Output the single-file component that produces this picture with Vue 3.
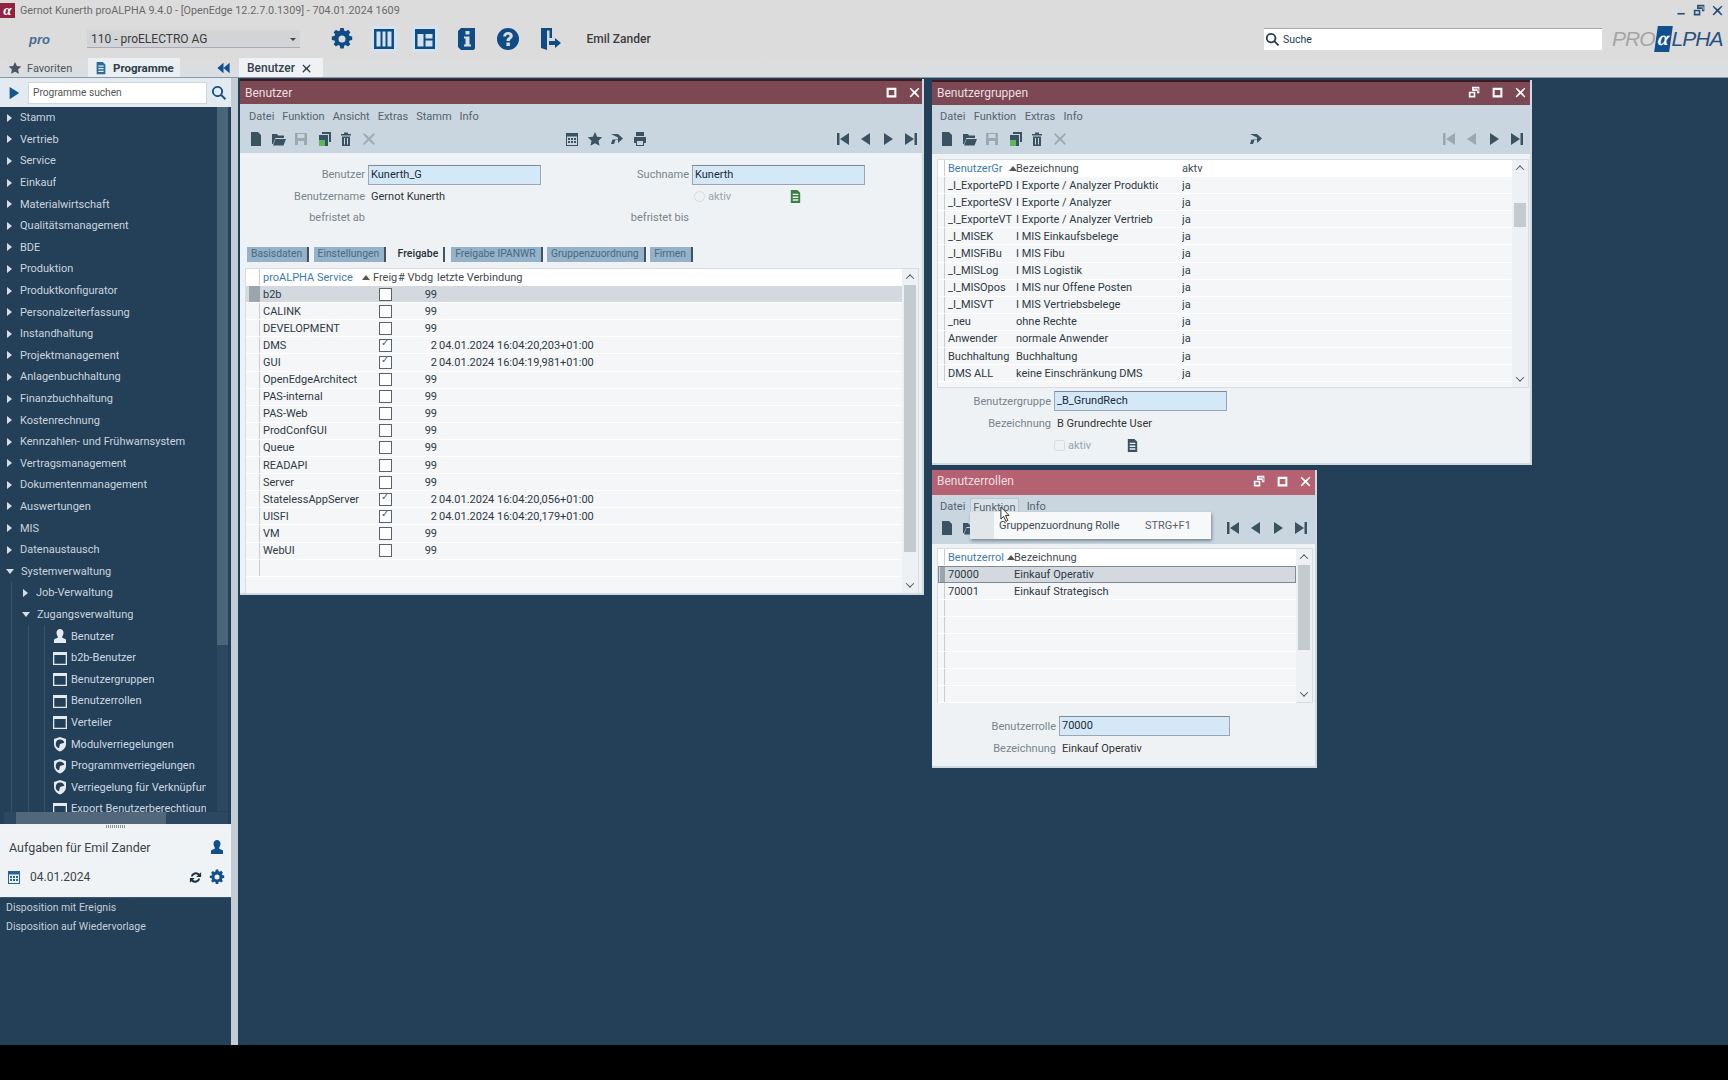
<script setup>
const icons = {
  gear: 'M10.3 1h3.4l.5 2.6 1.6.7 2.2-1.5 2.4 2.4-1.5 2.2.7 1.6 2.6.5v3.4l-2.6.5-.7 1.6 1.5 2.2-2.4 2.4-2.2-1.5-1.6.7-.5 2.6h-3.4l-.5-2.6-1.6-.7-2.2 1.5-2.4-2.4 1.5-2.2-.7-1.6-2.6-.5v-3.4l2.6-.5.7-1.6-1.5-2.2 2.4-2.4 2.2 1.5 1.6-.7zM12 8.5a3.5 3.5 0 1 0 0 7 3.5 3.5 0 0 0 0-7z',
  cols: 'M2 2h20v20H2zM4.5 4.5v15h4v-15zM10.5 4.5v15h3v-15zM15.500 4.5v15h4v-15z',
  tiles: 'M2 2h20v20H2zM4.500 7v12.500h6V7zM12.500 7v4.500h7V7zM12.500 13.500v6h7v-6z',
  info: 'M6 1h14v20a2 2 0 0 1-2 2H6l-3-3V4zM10.500 4v3.500h4V4zM9 9.500v2h1.500v6H9v2h7v-2h-1.500v-8z',
  help: 'M12 1a11 11 0 1 0 0 22 11 11 0 0 0 0-22zM12 5c3 0 4.800 1.600 4.800 3.900 0 2.600-3 3-3 5.100h-3.300c0-3.400 3-3.500 3-5 0-.8-.6-1.300-1.600-1.300-1.100 0-1.800.6-1.900 1.700H7.200C7.400 6.600 9.200 5 12 5zM10.400 15.500h3.500V19h-3.500z',
  exit: 'M3 1h11v10h-2.500V3.500H9V23l-6-2zM14 14h3v-3l6 5-6 5v-3h-6v-4z',
  new: 'M3 1h7l3 3v11H3z',
  open: 'M1 13V3h5l1 1.500h6V7H4.500L2 13zM4.500 8H15l-2.500 6.500H2z',
  save: 'M2 2h12v12H2zM4.500 3v4h7V3zM5 10v4h6v-4z',
  copy: 'M6 1h9v10h-2V3H6zM3 4h9v11H3z',
  trash: 'M3 3h10v1.500H3zM6 1.500h4V3H6zM4 5.500h8V15H4zM6 7v6.500h1V7zM9 7v6.500h1V7z',
  x: 'M2 3.200 3.200 2 8 6.400 12.800 2 14 3.200 9.700 8l4.300 4.800-1.200 1.200L8 9.600 3.200 14 2 12.800 6.300 8z',
  cal: 'M2 2h12v13H2zM3 5.500v8.500h10V5.500zM4 7h2v2H4zM7 7h2v2H7zM10 7h2v2h-2zM4 10h2v2H4zM7 10h2v2H7zM10 10h2v2h-2z',
  star: 'M8 1l2.200 4.700 5 .6-3.700 3.400 1 5L8 12.200l-4.500 2.500 1-5L.8 6.300l5-.6z',
  redo: 'M2 3h7l5 4.500-5 4.500v-3H6.500L5 13H2l1.500-4.500H9V6.500z',
  print: 'M4 1h8v4H4zM2 6h12v6h-2v3H4v-3H2zM5 10v4h6v-4z',
  first: 'M2 2h2.500v12H2zM14 2v12L5 8z',
  prev: 'M12 2v12L3 8z',
  next: 'M4 2v12l9-6z',
  last: 'M11.500 2H14v12h-2.500zM2 2v12l9-6z',
  doc: 'M3 1h7l3 3v11H3zM5 5v1.500h6V5zM5 8v1.500h6V8zM5 11v1.500h6V11z',
  restore: 'M5 1h9v8h-3V6H5zM7 3v1h5v3h1V3zM1 7h8v7H1zM3 9v3h4V9z',
  maxi: 'M2 2h12v12H2zM4.500 5v6.500h7V5z',
  search: 'M6.500 1a5.500 5.500 0 1 0 3.300 9.900l4 4 1.300-1.300-4-4A5.500 5.500 0 0 0 6.500 1zm0 1.800a3.700 3.700 0 1 1 0 7.400 3.700 3.700 0 0 1 0-7.400z',
  person: 'M8 1a3.500 3.500 0 0 1 3.500 3.800c0 2-1 3.300-1.500 4.100 0 1 2.500 1.300 4 2.600V15H2v-3.500c1.500-1.300 4-1.600 4-2.600-.5-.8-1.500-2.100-1.500-4.100A3.500 3.500 0 0 1 8 1z',
  window: 'M1 2h14v13H1zM2.300 5v8.700h11.400V5z',
  shield: 'M8 1l6 2v5c0 3.500-2.500 6-6 7.500C4.500 14 2 11.500 2 8V3zM8 3.500a4.500 4.500 0 0 0-1 8.800L8 8l4.300-1.300A4.500 4.500 0 0 0 8 3.500z',
  refresh: 'M3 7a5.500 5.500 0 0 1 9.300-3L14 2.300V7.500H8.800l1.900-1.900A3.500 3.500 0 0 0 5 7zM13 9a5.500 5.500 0 0 1-9.300 3L2 13.700V8.500h5.200l-1.900 1.900A3.500 3.500 0 0 0 11 9z',
  gear16: 'M6.800.500h2.400l.4 1.800 1.100.5 1.500-1 1.700 1.700-1 1.500.5 1.100 1.800.4v2.400l-1.800.4-.5 1.100 1 1.500-1.700 1.700-1.500-1-1.100.5-.4 1.800H6.800l-.4-1.800-1.100-.5-1.500 1-1.700-1.700 1-1.500-.5-1.100-1.800-.4V6.800l1.800-.4.5-1.100-1-1.500 1.700-1.700 1.500 1 1.100-.5zM8 5.500a2.500 2.500 0 1 0 0 5 2.500 2.500 0 0 0 0-5z'
}
const topIcons = ['gear', 'cols', 'tiles', 'info', 'help', 'exit']
const tree1 = ['Stamm','Vertrieb','Service','Einkauf','Materialwirtschaft','Qualitätsmanagement','BDE','Produktion','Produktkonfigurator','Personalzeiterfassung','Instandhaltung','Projektmanagement','Anlagenbuchhaltung','Finanzbuchhaltung','Kostenrechnung','Kennzahlen- und Frühwarnsystem','Vertragsmanagement','Dokumentenmanagement','Auswertungen','MIS','Datenaustausch']
const leaf = [['person','Benutzer'],['window','b2b-Benutzer'],['window','Benutzergruppen'],['window','Benutzerrollen'],['window','Verteiler'],['shield','Modulverriegelungen'],['shield','Programmverriegelungen'],['shield','Verriegelung für Verknüpfun'],['window','Export Benutzerberechtigun']]
const services = [
  ['b2b',0,'99',''],['CALINK',0,'99',''],['DEVELOPMENT',0,'99',''],
  ['DMS',1,'2','04.01.2024 16:04:20,203+01:00'],['GUI',1,'2','04.01.2024 16:04:19,981+01:00'],
  ['OpenEdgeArchitect',0,'99',''],['PAS-internal',0,'99',''],['PAS-Web',0,'99',''],['ProdConfGUI',0,'99',''],
  ['Queue',0,'99',''],['READAPI',0,'99',''],['Server',0,'99',''],
  ['StatelessAppServer',1,'2','04.01.2024 16:04:20,056+01:00'],['UISFI',1,'2','04.01.2024 16:04:20,179+01:00'],
  ['VM',0,'99',''],['WebUI',0,'99','']
]
const tabs = ['Basisdaten','Einstellungen','Freigabe','Freigabe IPANWR','Gruppenzuordnung','Firmen']
const groups = [
  ['_I_ExportePD','I Exporte / Analyzer Produktion'],['_I_ExporteSV','I Exporte / Analyzer'],['_I_ExporteVT','I Exporte / Analyzer Vertrieb'],
  ['_I_MISEK','I MIS Einkaufsbelege'],['_I_MISFiBu','I MIS Fibu'],['_I_MISLog','I MIS Logistik'],['_I_MISOpos','I MIS nur Offene Posten'],
  ['_I_MISVT','I MIS Vertriebsbelege'],['_neu','ohne Rechte'],['Anwender','normale Anwender'],['Buchhaltung','Buchhaltung'],['DMS ALL','keine Einschränkung DMS']
]
const roles = [['70000','Einkauf Operativ'],['70001','Einkauf Strategisch'],['',''],['',''],['',''],['',''],['',''],['','']]
const left6 = ['new','open','save','copy','trash','x']
const nav = ['first','prev','next','last']
</script>

<template>
  <div class="app">
    <header class="titlebar">
      <span class="alpha">α</span>
      <span class="apptitle">Gernot Kunerth proALPHA 9.4.0 - [OpenEdge 12.2.7.0.1309] - 704.01.2024 1609</span>
      <span class="winctl">
        <svg viewBox="0 0 16 16"><path d="M3 11h9v2H3z"/></svg>
        <svg viewBox="0 0 16 16"><path fill-rule="evenodd" :d="icons.restore"/></svg>
        <svg viewBox="0 0 16 16"><path :d="icons.x"/></svg>
      </span>
    </header>

    <div class="topbar">
      <span class="prologo">pro</span>
      <div class="mandant"><span>110 - proELECTRO AG</span><i class="sel-arrow"></i></div>
      <div class="topicons">
        <span v-for="n in topIcons" :key="n" class="topicon" :class="{hl: n==='cols'||n==='tiles'}">
          <svg viewBox="0 0 24 24"><path fill-rule="evenodd" :d="icons[n]"/></svg>
        </span>
      </div>
      <span class="username">Emil Zander</span>
      <div class="globalsearch">
        <svg viewBox="0 0 16 16"><path :d="icons.search"/></svg>
        <span>Suche</span>
      </div>
      <div class="brand"><span>PRO</span><b>α</b><span class="dk">LPHA</span></div>
    </div>

    <div class="tabrow">
      <div class="lefttabs">
        <span class="ltab"><svg viewBox="0 0 16 16"><path :d="icons.star"/></svg>Favoriten</span>
        <span class="ltab active"><svg viewBox="0 0 16 16"><path fill-rule="evenodd" :d="icons.doc"/></svg>Programme</span>
      </div>
      <svg class="collapse" viewBox="0 0 16 16"><path d="M8 2v12L1 8zM15 2v12L8 8z"/></svg>
      <div class="pagetab">Benutzer <svg viewBox="0 0 16 16"><path :d="icons.x"/></svg></div>
    </div>

    <div class="main">
      <aside class="sidebar">
        <div class="sidesearch">
          <svg class="play" viewBox="0 0 16 16"><path d="M3 1v14l11-7z"/></svg>
          <div class="sideinput">Programme suchen</div>
          <svg class="mag" viewBox="0 0 16 16"><path :d="icons.search"/></svg>
        </div>
        <div class="treewrap">
          <div class="tree">
            <div v-for="t in tree1" :key="t" class="trow"><i class="tri"></i><span>{{ t }}</span></div>
            <div class="trow"><i class="tri open"></i><span>Systemverwaltung</span></div>
            <div class="trow l1"><i class="tri"></i><span>Job-Verwaltung</span></div>
            <div class="trow l1"><i class="tri open"></i><span>Zugangsverwaltung</span></div>
            <div v-for="l in leaf" :key="l[1]" class="trow l2">
              <svg viewBox="0 0 16 16"><path fill-rule="evenodd" :d="icons[l[0]]"/></svg><span>{{ l[1] }}</span>
            </div>
          </div>
          <div class="vsb"><i></i></div>
          <div class="hsb"><i></i></div>
        </div>
        <div class="grip"><i></i></div>
        <div class="tasks">
          <div class="taskhead"><span>Aufgaben für Emil Zander</span><svg viewBox="0 0 16 16"><path :d="icons.person"/></svg></div>
          <div class="taskdate">
            <svg viewBox="0 0 16 16"><path fill-rule="evenodd" :d="icons.cal"/></svg>
            <span class="d">04.01.2024</span>
            <svg class="r" viewBox="0 0 16 16"><path :d="icons.refresh"/></svg>
            <svg class="g" viewBox="0 0 16 16"><path fill-rule="evenodd" :d="icons.gear16"/></svg>
          </div>
        </div>
        <div class="tasklist">
          <div>Disposition mit Ereignis</div>
          <div>Disposition auf Wiedervorlage</div>
        </div>
      </aside>
      <div class="splitter"></div>

      <div class="desktop">
        <!-- Benutzer -->
        <section class="win w-user">
          <div class="wintitle"><span>Benutzer</span>
            <span class="wc"><svg viewBox="0 0 16 16"><path fill-rule="evenodd" :d="icons.maxi"/></svg><svg viewBox="0 0 16 16"><path :d="icons.x"/></svg></span>
          </div>
          <div class="menubar"><span>Datei</span><span>Funktion</span><span>Ansicht</span><span>Extras</span><span>Stamm</span><span>Info</span></div>
          <div class="toolbar">
            <span v-for="n in left6" :key="n" class="ti" :class="['t-'+n]"><svg viewBox="0 0 16 16"><path fill-rule="evenodd" :d="icons[n]"/><rect v-if="n==='copy'" x="3" y="9" width="6" height="6" fill="#5cb85c"/></svg></span>
            <span class="mid-u"></span>
            <span v-for="n in ['cal','star','redo','print']" :key="n" class="ti"><svg viewBox="0 0 16 16"><path fill-rule="evenodd" :d="icons[n]"/></svg></span>
            <span class="grow"></span>
            <span v-for="n in nav" :key="n" class="ti"><svg viewBox="0 0 16 16"><path :d="icons[n]"/></svg></span>
          </div>
          <div class="form f-user">
            <label>Benutzer</label><div class="inp">Kunerth_G</div>
            <label>Suchname</label><div class="inp">Kunerth</div>
            <label>Benutzername</label><div class="val">Gernot Kunerth</div>
            <span class="lbl-gap"></span><div class="aktiv"><i class="radio"></i><span>aktiv</span><svg class="green" viewBox="0 0 16 16"><path fill-rule="evenodd" :d="icons.doc"/></svg></div>
            <label>befristet ab</label><div class="val"></div>
            <label>befristet bis</label><div class="val"></div>
          </div>
          <div class="tabs">
            <span v-for="t in tabs" :key="t" class="tab" :class="{on: t==='Freigabe'}">{{ t }}</span>
          </div>
          <div class="table t-user">
            <div class="grid">
              <div class="row head"><i class="ind"></i><span class="blue">proALPHA Service</span><span class="sort"></span><span>Freig</span><span># Vbdg</span><span>letzte Verbindung</span></div>
              <div v-for="(s,i) in services" :key="s[0]" class="row" :class="{sel:i===0}">
                <i class="ind" :class="{cur:i===0}"></i><span>{{ s[0] }}</span><span></span>
                <span class="cbx" :class="{chk:s[1]}"></span>
                <span class="num">{{ s[2] }}</span><span class="dt">{{ s[3] }}</span>
              </div>
              <div class="row"><i class="ind"></i></div>
            </div>
            <div class="sb"><i class="up"></i><b class="thumb full"></b><i class="down"></i></div>
          </div>
        </section>

        <!-- Benutzergruppen -->
        <section class="win w-group">
          <div class="wintitle"><span>Benutzergruppen</span>
            <span class="wc"><svg viewBox="0 0 16 16"><path fill-rule="evenodd" :d="icons.restore"/></svg><svg viewBox="0 0 16 16"><path fill-rule="evenodd" :d="icons.maxi"/></svg><svg viewBox="0 0 16 16"><path :d="icons.x"/></svg></span>
          </div>
          <div class="menubar"><span>Datei</span><span>Funktion</span><span>Extras</span><span>Info</span></div>
          <div class="toolbar">
            <span v-for="n in left6" :key="n" class="ti" :class="['t-'+n]"><svg viewBox="0 0 16 16"><path fill-rule="evenodd" :d="icons[n]"/><rect v-if="n==='copy'" x="3" y="9" width="6" height="6" fill="#5cb85c"/></svg></span>
            <span class="mid-g"></span>
            <span class="ti"><svg viewBox="0 0 16 16"><path :d="icons.redo"/></svg></span>
            <span class="grow"></span>
            <span v-for="(n,i) in nav" :key="n" class="ti" :class="{dim:i<2}"><svg viewBox="0 0 16 16"><path :d="icons[n]"/></svg></span>
          </div>
          <div class="table t-group">
            <div class="grid">
              <div class="row head"><i class="ind"></i><span class="blue">BenutzerGr</span><span class="sort"></span><span>Bezeichnung</span><span>aktv</span></div>
              <div v-for="g in groups" :key="g[0]" class="row"><i class="ind"></i><span class="nm">{{ g[0] }}</span><span></span><span class="bz">{{ g[1] }}</span><span>ja</span></div>
            </div>
            <div class="sb"><i class="up"></i><b class="thumb small"></b><i class="down"></i></div>
          </div>
          <div class="form f-group">
            <label>Benutzergruppe</label><div class="inp">_B_GrundRech</div>
            <label>Bezeichnung</label><div class="val">B Grundrechte User</div>
            <span></span><div class="aktiv a2"><i class="radio sq"></i><span>aktiv</span><svg viewBox="0 0 16 16"><path fill-rule="evenodd" :d="icons.doc"/></svg></div>
          </div>
        </section>

        <!-- Benutzerrollen -->
        <section class="win w-role">
          <div class="wintitle"><span>Benutzerrollen</span>
            <span class="wc"><svg viewBox="0 0 16 16"><path fill-rule="evenodd" :d="icons.restore"/></svg><svg viewBox="0 0 16 16"><path fill-rule="evenodd" :d="icons.maxi"/></svg><svg viewBox="0 0 16 16"><path :d="icons.x"/></svg></span>
          </div>
          <div class="menubar"><span>Datei</span><span class="hover">Funktion</span><span>Info</span></div>
          <div class="toolbar">
            <span class="ti"><svg viewBox="0 0 16 16"><path :d="icons.new"/></svg></span>
            <span class="ti"><svg viewBox="0 0 16 16"><path :d="icons.open"/></svg></span>
            <span class="grow"></span>
            <span v-for="n in nav" :key="n" class="ti"><svg viewBox="0 0 16 16"><path :d="icons[n]"/></svg></span>
          </div>
          <div class="table t-role">
            <div class="grid">
              <div class="row head"><i class="ind"></i><span class="blue">Benutzerrol</span><span class="sort"></span><span>Bezeichnung</span></div>
              <div v-for="(r,i) in roles" :key="i" class="row" :class="{sel:i===0, outlined:i===0}"><i class="ind" :class="{cur:i===0}"></i><span>{{ r[0] }}</span><span></span><span>{{ r[1] }}</span></div>
            </div>
            <div class="sb"><i class="up"></i><b class="thumb half"></b><i class="down"></i></div>
          </div>
          <div class="form f-role">
            <label>Benutzerrolle</label><div class="inp">70000</div>
            <label>Bezeichnung</label><div class="val">Einkauf Operativ</div>
          </div>
          <div class="popup">
            <span class="gutter"></span><span class="pitem">Gruppenzuordnung Rolle</span><span class="short">STRG+F1</span>
          </div>
          <svg class="cursor" viewBox="0 0 12 18"><path d="M1 1v13l3-3 2.500 5.500 2-1L6 10h4z" fill="#fff" stroke="#222" stroke-width="1"/></svg>
        </section>
      </div>
    </div>
    <footer class="bottom"></footer>
  </div>
</template>

<style>
html, body { margin: 0; background: #000; }
</style>

<style scoped>
.app { width: 1728px; height: 1080px; display: flex; flex-direction: column; font-family: Roboto, "Noto Sans", sans-serif; font-size: 11px; color: #2b2b2b; overflow: hidden; background: #000; }
svg { display: block; fill: currentColor; flex: none; }

.titlebar { height: 20px; flex: none; display: flex; align-items: center; background: #dddcdc; color: #6a6a6a; }
.alpha { width: 15px; height: 15px; background: #8f2340; color: #fff; font: italic bold 15px/14px "Liberation Serif", serif; text-align: center; }
.apptitle { margin-left: 5px; font-size: 10.800px; white-space: nowrap; }
.winctl { margin-left: auto; display: flex; gap: 5px; padding-right: 4px; color: #24507a; }
.winctl svg { width: 13px; height: 13px; }

.topbar { height: 38px; flex: none; display: flex; align-items: center; background: #dddcdc; }
.prologo { margin-left: 29px; width: 58px; font: italic bold 13px "Liberation Sans", sans-serif; color: #4a6a93; }
.mandant { width: 213px; height: 18px; display: flex; align-items: center; justify-content: space-between; padding: 0 4px; box-sizing: border-box; background: #d2d4d5; border-bottom: 1px solid #aab; color: #3b3b3b; font-size: 12px; }
.sel-arrow { border: 3.500px solid transparent; border-top-color: #444; margin-top: 4px; }
.topicons { display: flex; margin-left: 29px; gap: 15.500px; color: #0f4c86; }
.topicon { width: 26px; height: 26px; display: flex; align-items: center; justify-content: center; }
.topicon svg { width: 24px; height: 24px; }
.topicon.hl { background: #d2e2ef; }
.username { margin-left: 24px; font-weight: 500; font-size: 12px; color: #3c3c3c; white-space: nowrap; }
.globalsearch { margin-left: auto; width: 338px; height: 22px; display: flex; align-items: center; gap: 3px; background: #fff; border-top: 1px solid #aaa; box-sizing: border-box; color: #1d3b55; font-size: 10.500px; }
.globalsearch svg { width: 15px; height: 15px; margin-left: 1px; }
.brand { width: 114px; margin-left: 10px; margin-right: 2px; font: italic 21px "Liberation Sans", sans-serif; color: #a5a5a5; display: flex; align-items: center; letter-spacing: -1px; white-space: nowrap; }
.brand b { background: #124f8f; color: #fff; padding: 1px 3px 3px 2px; font: italic bold 20px/22px "Liberation Serif", serif; transform: skewX(-8deg); margin: 0 1px; }
.brand .dk { color: #27527e; }

.tabrow { height: 20px; flex: none; display: flex; align-items: flex-end; background: linear-gradient(#dddcdc, #d9dfe3); border-bottom: 1px solid #8c979f; box-sizing: border-box; }
.lefttabs { display: flex; width: 216px; align-items: flex-end; }
.ltab { display: flex; align-items: center; gap: 5px; height: 19px; padding: 1px 9px 0; color: #505558; font-size: 11px; box-sizing: border-box; }
.ltab svg { width: 14px; height: 14px; color: #4b5560; }
.ltab:first-child { width: 86px; padding-left: 8px; }
.ltab.active { background: #e9eff3; font-weight: 700; font-size: 11.500px; width: 92px; color: #2f3d48; padding-left: 6px; margin-left: 2px; }
.ltab.active svg { color: #2f6a9c; }
.collapse { width: 15px; height: 14px; color: #124f8f; margin: 0 0 2px 0; }
.pagetab { margin-left: 8px; width: 84px; height: 19px; box-sizing: border-box; background: #eef2f5; display: flex; align-items: center; gap: 6px; padding: 1px 0 0 8px; font-weight: 500; font-size: 12px; color: #33414c; }
.pagetab svg { width: 11px; height: 11px; }

.main { flex: 1; min-height: 0; display: flex; background: #243f58; }
.sidebar { width: 231px; flex: none; display: flex; flex-direction: column; background: #243f58; }
.splitter { width: 7px; flex: none; background: #c3cdd5; }
.sidesearch { height: 29px; flex: none; background: #e4ebf0; display: flex; align-items: center; box-sizing: border-box; }
.sidesearch .play { width: 14px; height: 14px; margin-left: 7px; color: #12588f; }
.sideinput { margin-left: 7px; width: 179px; height: 22px; line-height: 20px; background: #fff; box-sizing: border-box; padding-left: 4px; border: 1px solid #cfd6db; color: #555; font-size: 10.200px; }
.mag { width: 16px; height: 16px; margin-left: 4px; color: #12508a; }
.treewrap { height: 717px; flex: none; position: relative; overflow: hidden; }
.tree { height: 706px; overflow: hidden; padding-top: 0; }
.trow { height: 21.600px; width: 216px; display: flex; align-items: center; color: #c9d5de; font-size: 11px; white-space: nowrap; overflow: hidden; padding-left: 7px; box-sizing: border-box; }
.trow span { overflow: hidden; }
.tri { width: 0; height: 0; border-left: 5px solid #d5dee5; border-top: 4px solid transparent; border-bottom: 4px solid transparent; margin-right: 8px; flex: none; }
.tri.open { border-left: 4px solid transparent; border-right: 4px solid transparent; border-top: 5px solid #d5dee5; border-bottom: 0; margin-left: -1px; margin-right: 7px; }
.l1 { padding-left: 23px; background: linear-gradient(#37536b, #37536b) 11px 0 / 1px 100% no-repeat; }
.l2 { padding-left: 52px; width: 206px; color: #ccd8e1; background: linear-gradient(#37536b, #37536b) 11px 0 / 1px 100% no-repeat, linear-gradient(#37536b, #37536b) 28px 0 / 1px 100% no-repeat, linear-gradient(#37536b, #37536b) 44px 0 / 1px 100% no-repeat; }
.l2 svg { width: 16px; height: 16px; color: #e4eaee; margin-right: 3px; }
.vsb { position: absolute; right: 3px; top: 0; bottom: 13px; width: 11px; background: #2c475f; }
.vsb i { display: block; height: 538px; background: #4a6478; }
.hsb { position: absolute; left: 4px; right: 3px; bottom: 0; height: 12px; background: #2c475f; }
.hsb i { display: block; margin-left: 12px; width: 150px; height: 100%; background: #52687a; }
.grip { height: 3px; flex: none; background: #eef2f5; display: flex; justify-content: center; padding-top: 1px; }
.grip i { width: 20px; height: 3px; background: repeating-linear-gradient(90deg, #8a949c 0 1px, transparent 1px 2px); }
.tasks { height: 69px; flex: none; background: #eff3f6; display: flex; flex-direction: column; box-sizing: border-box; padding: 7px 6px 0 6px; color: #3d4347; }
.taskhead { display: flex; align-items: center; justify-content: space-between; height: 24px; padding-left: 3px; font-size: 12.500px; font-weight: 400; }
.taskhead svg, .taskdate .g { width: 16px; height: 16px; color: #124f8f; }
.taskdate { display: flex; align-items: center; margin-top: 10px; }
.taskdate > svg:first-child { width: 16px; height: 16px; color: #2563a0; }
.taskdate .d { margin-left: 8px; font-size: 12px; }
.taskdate .r { margin-left: auto; width: 15px; height: 15px; color: #1b2f40; }
.taskdate .g { margin-left: 6px; }
.tasklist { flex: 1; background: #243f58; color: #c2cfd9; padding: 0 6px; font-size: 10.500px; line-height: 19px; border-top: 1px solid #3a5670; }

.desktop { flex: 1; position: relative; }
.win { position: absolute; display: flex; flex-direction: column; background: #eef2f5; box-sizing: border-box; border-right: 2px solid #cfd9e0; border-bottom: 2px solid #cfd9e0; }
.w-user { left: 2px; top: 1px; width: 684px; height: 516px; }
.w-group { left: 694px; top: 2px; width: 600px; height: 385px; }
.w-role { left: 694px; top: 392px; width: 385px; height: 298px; }
.wintitle { height: 25px; flex: none; background: #7b4853; border-top: 2px solid #3b1c24; box-sizing: border-box; color: #efdfe2; font-size: 12px; display: flex; align-items: center; justify-content: space-between; padding: 0 3px 2px 5px; }
.w-user .wintitle { padding-bottom: 0; padding-right: 1px; }
.w-role .wintitle { background: #b46171; border-top-color: #b46171; padding-bottom: 5px; }
.wc { display: flex; gap: 10px; color: #fff; }
.wc svg { width: 13px; height: 13px; }
.menubar { height: 22px; flex: none; background: #c9d6e0; display: flex; align-items: center; padding: 1px 0 0 8px; gap: 8.500px; color: #56626b; font-size: 11px; box-sizing: border-box; }
.w-user .menubar { padding: 3px 0 0 9px; gap: 8px; }
.toolbar { height: 27px; flex: none; background: #c9d6e0; display: flex; align-items: center; padding: 0 0 2px 5px; color: #3b5361; box-sizing: border-box; }
.ti { width: 22.500px; height: 18px; display: flex; align-items: center; justify-content: center; }
.ti svg { width: 16px; height: 16px; }
.t-save, .dim { color: #9aa8b1; }
.t-x { color: #a0acb4; }
.grow { flex: 1; }
.mid-u { width: 181px; }
.mid-g { width: 174px; }
.w-group .toolbar { padding: 0 2px 4px 4px; }
.w-role .toolbar { padding-left: 4px; margin-top: -3px; padding-right: 3px; height: 30px; }

.form { display: grid; align-items: center; color: #333; }
.form label { text-align: right; color: #7a848b; padding-right: 3px; font-size: 11px; }
.inp { height: 20px; line-height: 18px; box-sizing: border-box; padding-left: 2px; background: #d5e8f7; border: 1px solid #9aa7b2; border-top-color: #7d8a95; color: #1b2b38; }
.f-user { height: 76px; grid-template-columns: 128px 173px 151px 173px; grid-auto-rows: 21.500px; padding-top: 11px; box-sizing: border-box; flex: none; }
.f-user .val, .f-group .val, .f-role .val { padding-left: 3px; }
.aktiv { display: flex; align-items: center; color: #9aa4ab; font-size: 11px; }
.radio { width: 9px; height: 9px; border-radius: 50%; border: 1px solid #d6dcdf; margin: 0 3px 0 2px; }
.radio.sq { border-radius: 2px; margin-left: 0; }
.aktiv svg { width: 15px; height: 15px; margin-left: 57px; color: #3b5361; }
.aktiv svg.green { color: #3c7f43; }
.aktiv.a2 svg { margin-left: 34px; }
.tabs { display: flex; height: 16px; flex: none; margin: 18px 0 0 7px; font-size: 10.300px; }
.tab { height: 15px; line-height: 14px; padding: 0 5px 0 4px; background: #94b2c9; color: #4a6a80; border-right: 2px solid #44525c; margin-right: 4.500px; white-space: nowrap; }
.tab.on { background: transparent; color: #263138; font-weight: 500; font-size: 10.500px; padding: 0 5px 0 7px; margin-right: 6px; }
.table { display: flex; flex: none; border: 1px solid #d7dee3; box-sizing: border-box; background: #f4f6f8; }
.t-user { height: 326px; margin: 5px 3px 0 5px; }
.t-group { height: 229px; margin: 5px 0 0 5px; width: 592px; }
.t-role { height: 155px; margin: 4px 0 0 5px; width: 376px; }
.grid { flex: 1; min-width: 0; }
.row { height: 17.100px; display: grid; align-items: center; white-space: nowrap; border-bottom: 1px solid #fff; box-sizing: border-box; color: #2f3a42; font-size: 11px; }
.row span { overflow: hidden; }
.head { background: #fff; color: #414a50; }
.blue { color: #3d7cb0; }
.sort { width: 0; height: 0; border-left: 4px solid transparent; border-right: 4px solid transparent; border-bottom: 5px solid #555; justify-self: start; margin-left: 3px; }
.ind { display: block; height: 100%; background: linear-gradient(#c6ced4, #c6ced4) right 3px top 0 / 1px 100% no-repeat; box-sizing: border-box; }
.ind.cur { background: linear-gradient(#9ba5ac, #9ba5ac) left 2px top 0 / calc(100% - 5px) 100% no-repeat; }
.sel { background: #d4d9df; }
.outlined { outline: 1px solid #7f8a92; outline-offset: -1px; }
.t-user .row { grid-template-columns: 16px 96px 14px 25px 39px 1fr; padding-left: 1px; }
.dt { padding-left: 2px; }
.cbx { width: 11px; height: 11px; border: 1px solid #59636b; background: #fff; justify-self: center; box-sizing: content-box; position: relative; }
.cbx.chk::after { content: "✓"; position: absolute; left: 1px; top: -3px; font-size: 10px; color: #4a565e; }
.num { text-align: right; }
.t-group .row { grid-template-columns: 10px 58px 10px 166px 1fr; }
.t-group .nm { overflow: visible; }
.t-group .bz { margin-right: 24px; }
.t-role .row { grid-template-columns: 10px 56px 10px 1fr; }
.sb { width: 16px; flex: none; background: #eef1f3; display: flex; flex-direction: column; position: relative; }
.sb .up, .sb .down { height: 16px; flex: none; display: flex; align-items: center; justify-content: center; }
.sb .up::before, .sb .down::before { content: ""; width: 5px; height: 5px; border-left: 1.500px solid #555; border-top: 1.500px solid #555; }
.sb .up::before { transform: rotate(45deg) translate(1px, 1px); }
.sb .down::before { transform: rotate(225deg) translate(1px, 1px); }
.sb .thumb { display: block; background: #c4cbcf; width: 12px; margin-left: 2px; }
.thumb.full { flex: 1; margin-bottom: 25px; }
.thumb.small { height: 24px; margin-top: 27px; margin-bottom: auto; }
.thumb.half { height: 85px; margin-bottom: auto; }

.f-group { height: 78px; padding-top: 2px; box-sizing: border-box; grid-template-columns: 122px 1fr; grid-auto-rows: 22px; flex: none; }
.f-group .inp { width: 173px; }
.f-role { padding-top: 12px; grid-template-columns: 127px 1fr; grid-auto-rows: 22px; box-sizing: border-box; }
.f-role .inp { width: 171px; }

.w-role .menubar { gap: 0; padding-left: 4px; }
.w-role .menubar span { padding: 0 4px; line-height: 17px; }
.w-role .menubar .hover { background: #d9e2e9; border: 1px solid #bcc8d1; border-bottom: 0; padding: 0 2px; margin: 0 4px 0 1px; }
.popup { position: absolute; left: 38px; top: 42px; width: 241px; height: 27px; background: #f6f8fa; box-shadow: 1px 2px 3px #7c8a96; display: flex; align-items: center; color: #444c52; font-size: 11px; z-index: 2; }
.gutter { width: 24px; height: 100%; background: #e0e6ea; margin-right: 5px; }
.pitem { width: 146px; }
.short { color: #5a6268; }
.cursor { position: absolute; left: 68px; top: 36px; width: 11px; height: 17px; z-index: 3; }

.bottom { height: 35px; flex: none; background: #000; }
</style>
